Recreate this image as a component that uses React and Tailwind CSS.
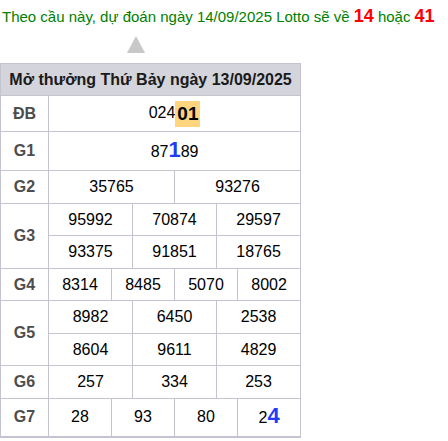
const Cell = ({ span, children }) => (
  <td colSpan={span} className="border border-[#c4c4d0] text-center text-[16px] text-black">
    {children}
  </td>
);

const Label = ({ children, rowSpan }) => (
  <td rowSpan={rowSpan} className="border border-[#c4c4d0] text-center font-bold text-[16px] text-[#4d4d4d]">
    {children}
  </td>
);

const Big = ({ children }) => (
  <span className="text-[#1f3cf5] font-bold text-[22px] leading-none">{children}</span>
);

export default function App() {
  return (
    <div className="bg-white min-h-screen" style={{ fontFamily: '"Liberation Sans", Arial, sans-serif' }}>
      <p className="pl-[2px] pt-[5px] text-[15px] leading-[22px] text-[#008000] whitespace-nowrap">
        Theo cầu này, dự đoán ngày 14/09/2025 Lotto sẽ về{' '}
        <span className="text-[18px] font-bold text-[#ff0000]">14</span> hoặc{' '}
        <span className="text-[18px] font-bold text-[#ff0000]">41</span>
      </p>
      <div className="h-[35px] flex items-end pl-[127px] pb-[10px]">
        <div className="w-0 h-0 border-l-[9px] border-r-[9px] border-b-[17px] border-l-transparent border-r-transparent border-b-[#c8c8c8]" />
      </div>
      <table className="w-[301px] border-collapse table-fixed border-b-2 border-b-[#c4c4d0]">
        <colgroup>
          <col className="w-[48px]" />
          {Array.from({ length: 12 }).map((_, i) => (
            <col key={i} className="w-[21px]" />
          ))}
        </colgroup>
        <tbody>
          <tr className="h-[32px] bg-[#d4d4dc]">
            <td colSpan={13} className="border border-[#c4c4d0] text-center font-bold text-[16px] text-[#1a1a1a]">
              Mở thưởng Thứ Bảy ngày 13/09/2025
            </td>
          </tr>
          <tr className="h-[36px]">
            <Label>ĐB</Label>
            <Cell span={12}>
              024<span className="inline-block bg-[#ffd580] font-bold text-[19px] px-[2px] leading-[26px] align-middle">01</span>
            </Cell>
          </tr>
          <tr className="h-[39px]">
            <Label>G1</Label>
            <Cell span={12}>
              87<Big>1</Big>89
            </Cell>
          </tr>
          <tr className="h-[33px]">
            <Label>G2</Label>
            <Cell span={6}>35765</Cell>
            <Cell span={6}>93276</Cell>
          </tr>
          <tr className="h-[32px]">
            <Label rowSpan={2}>G3</Label>
            <Cell span={4}>95992</Cell>
            <Cell span={4}>70874</Cell>
            <Cell span={4}>29597</Cell>
          </tr>
          <tr className="h-[33px]">
            <Cell span={4}>93375</Cell>
            <Cell span={4}>91851</Cell>
            <Cell span={4}>18765</Cell>
          </tr>
          <tr className="h-[32px]">
            <Label>G4</Label>
            <Cell span={3}>8314</Cell>
            <Cell span={3}>8485</Cell>
            <Cell span={3}>5070</Cell>
            <Cell span={3}>8002</Cell>
          </tr>
          <tr className="h-[33px]">
            <Label rowSpan={2}>G5</Label>
            <Cell span={4}>8982</Cell>
            <Cell span={4}>6450</Cell>
            <Cell span={4}>2538</Cell>
          </tr>
          <tr className="h-[32px]">
            <Cell span={4}>8604</Cell>
            <Cell span={4}>9611</Cell>
            <Cell span={4}>4829</Cell>
          </tr>
          <tr className="h-[33px]">
            <Label>G6</Label>
            <Cell span={4}>257</Cell>
            <Cell span={4}>334</Cell>
            <Cell span={4}>253</Cell>
          </tr>
          <tr className="h-[38px]">
            <Label>G7</Label>
            <Cell span={3}>28</Cell>
            <Cell span={3}>93</Cell>
            <Cell span={3}>80</Cell>
            <Cell span={3}>
              2<Big>4</Big>
            </Cell>
          </tr>
        </tbody>
      </table>
    </div>
  );
}
